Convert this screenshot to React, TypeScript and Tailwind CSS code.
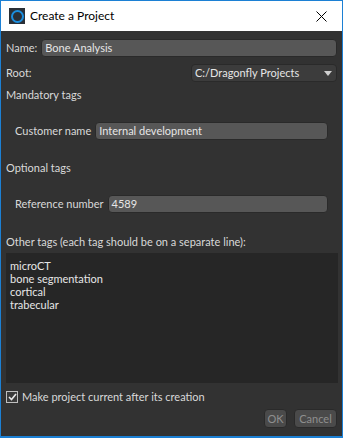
import React from 'react';

const font = { fontFamily: 'Lato, "Noto Sans", sans-serif' };

function Field({ value }: { value: string }) {
  return (
    <div className="flex-1 h-[18px] flex items-center rounded-[4px] border border-[#2a2a2a] bg-[#575757] px-[3px] text-[#e6e6e6]">
      {value}
    </div>
  );
}

export default function App() {
  const tags = ['microCT', 'bone segmentation', 'cortical', 'trabecular'];

  return (
    <div
      className="w-[343px] h-[438px] flex flex-col border border-b-2 border-[#1c80d4] bg-[#323232] text-[11px] leading-[14px] text-[#d9d9d9]"
      style={font}
    >
      <div className="h-[30px] shrink-0 bg-white flex items-center text-black">
        <div className="ml-[8px] w-[16px] h-[16px] bg-[#2a2f36] flex items-center justify-center">
          <div className="w-[13px] h-[13px] rounded-full border-2 border-[#1b8fe0]" />
        </div>
        <span className="ml-[5px] text-[12px]">Create a Project</span>
        <svg className="ml-auto mr-[15px]" width="11" height="11" viewBox="0 0 11 11">
          <path d="M0.5 0.5 L10.5 10.5 M10.5 0.5 L0.5 10.5" stroke="#000" strokeWidth="1" />
        </svg>
      </div>

      <div className="flex-1 flex flex-col px-[5px]">
        <div className="mt-[8px] flex items-center gap-[4px]">
          <span>Name:</span>
          <Field value="Bone Analysis" />
        </div>

        <div className="mt-[7px] flex items-center">
          <span>Root:</span>
          <div className="ml-auto w-[146px] h-[18px] flex items-center rounded-[4px] border border-[#2a2a2a] bg-[#3c3c3c] pl-[3px] pr-[4px] text-[#e6e6e6]">
            <span>C:/Dragonfly Projects</span>
            <svg className="ml-auto" width="8" height="5" viewBox="0 0 8 5">
              <path d="M0 0 L8 0 L4 5 Z" fill="#cfcfcf" />
            </svg>
          </div>
        </div>

        <div className="mt-[6px]">Mandatory tags</div>

        <div className="mt-[20px] px-[9px] flex items-center gap-[4px]">
          <span>Customer name</span>
          <Field value="Internal development" />
        </div>

        <div className="mt-[21px]">Optional tags</div>

        <div className="mt-[20px] px-[9px] flex items-center gap-[4px]">
          <span>Reference number</span>
          <Field value="4589" />
        </div>

        <div className="mt-[22px]">Other tags (each tag should be on a separate line):</div>

        <div className="mt-[4px] mr-[-1px] h-[130px] bg-[#262626] px-[4px] pt-[6px] leading-[13px] text-[#e6e6e6]">
          {tags.map((t) => (
            <div key={t}>{t}</div>
          ))}
        </div>

        <div className="mt-[7px] flex items-center gap-[4px]">
          <div className="w-[12px] h-[12px] border border-[#bfbfbf] bg-[#3a3a3a] flex items-center justify-center">
            <svg width="9" height="8" viewBox="0 0 9 8">
              <path d="M1 4 L3.5 6.5 L8 1" stroke="#e8e8e8" strokeWidth="1.6" fill="none" />
            </svg>
          </div>
          <span>Make project current after its creation</span>
        </div>

        <div className="mt-[5px] flex justify-end gap-[7px]">
          <button className="w-[23px] h-[19px] rounded-[4px] border border-[#2a2a2a] bg-[#4a4a4a] text-[#8f8f8f]">OK</button>
          <button className="w-[43px] h-[19px] rounded-[4px] border border-[#2a2a2a] bg-[#4a4a4a] text-[#8f8f8f]">Cancel</button>
        </div>
      </div>
    </div>
  );
}
